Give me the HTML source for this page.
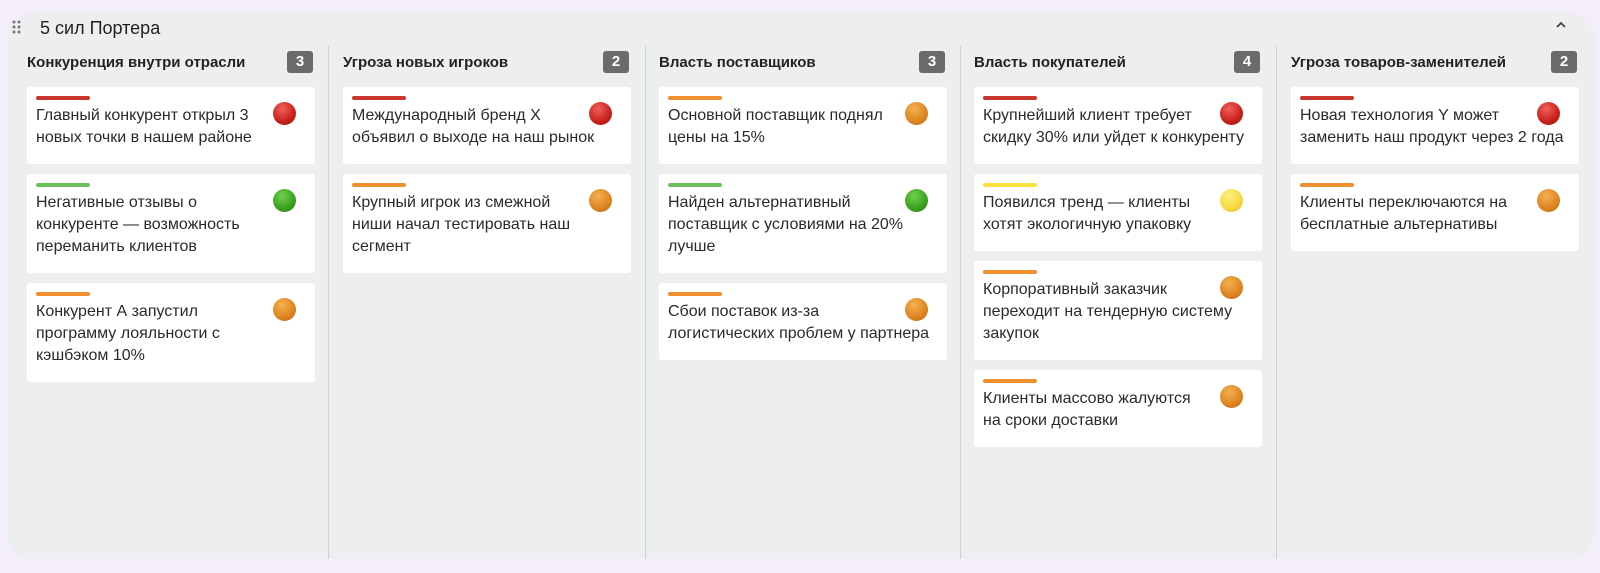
<!DOCTYPE html>
<html><head><meta charset="utf-8"><style>
*{box-sizing:border-box;margin:0;padding:0}
body{width:1600px;height:573px;background:#f4eefb;font-family:"Liberation Sans",sans-serif;position:relative;overflow:hidden}
.panel{position:absolute;left:7px;top:13px;width:1587px;height:546px;background:#eceef0;border-radius:25px}
.title{position:absolute;left:40px;top:18px;font-size:18px;color:#1f1f1f}
.grip{position:absolute;left:12px;top:20px}
.chev{position:absolute;left:1554px;top:18px}
.col{position:absolute;top:35px;width:288px}
.div{position:absolute;top:46px;width:1px;height:513px;background:#cfd2d5}
.ch{height:52px;position:relative}
.ch span{position:absolute;left:0;top:19px;font-size:15px;font-weight:bold;color:#222}
.badge{position:absolute;right:2px;top:16px;width:26px;height:22px;background:#6b6b6b;color:#fff;border-radius:3px;font-size:15px;font-weight:bold;text-align:center;line-height:22px}
.card{background:#fff;border-radius:3px;padding:9px 9px 15px 9px;margin-bottom:10px;position:relative;font-size:16px;line-height:22px;color:#2a2a2a;white-space:nowrap}
.bar{width:54px;height:4px;border-radius:2px;margin-bottom:5px}
.dot{position:absolute;right:19px;top:15px;width:23px;height:23px;border-radius:50%}
.r{background:radial-gradient(circle at 40% 30%,#f0605a,#c8201c 60%,#9a1410)}
.o{background:radial-gradient(circle at 40% 30%,#f5b050,#dc8420 60%,#b8640e)}
.g{background:radial-gradient(circle at 40% 30%,#70d050,#3aa020 60%,#2a7c14)}
.y{background:radial-gradient(circle at 40% 30%,#fff080,#f7d840 60%,#e0b820)}
.br{background:#c9342e}.bo{background:#ef8f2d}.bg{background:#6cbf5d}.by{background:#f7e240}
</style></head><body>
<div class="panel"></div>
<svg class="grip" width="10" height="14" viewBox="0 0 10 14"><g fill="#777"><circle cx="2" cy="2" r="1.5"/><circle cx="7" cy="2" r="1.5"/><circle cx="2" cy="7" r="1.5"/><circle cx="7" cy="7" r="1.5"/><circle cx="2" cy="12" r="1.5"/><circle cx="7" cy="12" r="1.5"/></g></svg>
<div class="title">5 сил Портера</div>
<svg class="chev" width="14" height="14" viewBox="0 0 14 14"><path d="M3 9 L7 5 L11 9" fill="none" stroke="#444" stroke-width="1.8"/></svg>
<div class="div" style="left:328px"></div><div class="div" style="left:645px"></div><div class="div" style="left:960px"></div><div class="div" style="left:1276px"></div>

<div class="col" style="left:27px">
<div class="ch"><span>Конкуренция внутри отрасли</span><div class="badge">3</div></div>
<div class="card"><div class="bar br"></div><div class="dot r"></div>Главный конкурент открыл 3<br>новых точки в нашем районе</div>
<div class="card"><div class="bar bg"></div><div class="dot g"></div>Негативные отзывы о<br>конкуренте — возможность<br>переманить клиентов</div>
<div class="card"><div class="bar bo"></div><div class="dot o"></div>Конкурент А запустил<br>программу лояльности с<br>кэшбэком 10%</div>
</div>
<div class="col" style="left:343px">
<div class="ch"><span>Угроза новых игроков</span><div class="badge">2</div></div>
<div class="card"><div class="bar br"></div><div class="dot r"></div>Международный бренд X<br>объявил о выходе на наш рынок</div>
<div class="card"><div class="bar bo"></div><div class="dot o"></div>Крупный игрок из смежной<br>ниши начал тестировать наш<br>сегмент</div>
</div>
<div class="col" style="left:659px">
<div class="ch"><span>Власть поставщиков</span><div class="badge">3</div></div>
<div class="card"><div class="bar bo"></div><div class="dot o"></div>Основной поставщик поднял<br>цены на 15%</div>
<div class="card"><div class="bar bg"></div><div class="dot g"></div>Найден альтернативный<br>поставщик с условиями на 20%<br>лучше</div>
<div class="card"><div class="bar bo"></div><div class="dot o"></div>Сбои поставок из-за<br>логистических проблем у партнера</div>
</div>
<div class="col" style="left:974px">
<div class="ch"><span>Власть покупателей</span><div class="badge">4</div></div>
<div class="card"><div class="bar br"></div><div class="dot r"></div>Крупнейший клиент требует<br>скидку 30% или уйдет к конкуренту</div>
<div class="card"><div class="bar by"></div><div class="dot y"></div>Появился тренд — клиенты<br>хотят экологичную упаковку</div>
<div class="card"><div class="bar bo"></div><div class="dot o"></div>Корпоративный заказчик<br>переходит на тендерную систему<br>закупок</div>
<div class="card"><div class="bar bo"></div><div class="dot o"></div>Клиенты массово жалуются<br>на сроки доставки</div>
</div>
<div class="col" style="left:1291px">
<div class="ch"><span>Угроза товаров-заменителей</span><div class="badge">2</div></div>
<div class="card"><div class="bar br"></div><div class="dot r"></div>Новая технология Y может<br>заменить наш продукт через 2 года</div>
<div class="card"><div class="bar bo"></div><div class="dot o"></div>Клиенты переключаются на<br>бесплатные альтернативы</div>
</div>
</body></html>
